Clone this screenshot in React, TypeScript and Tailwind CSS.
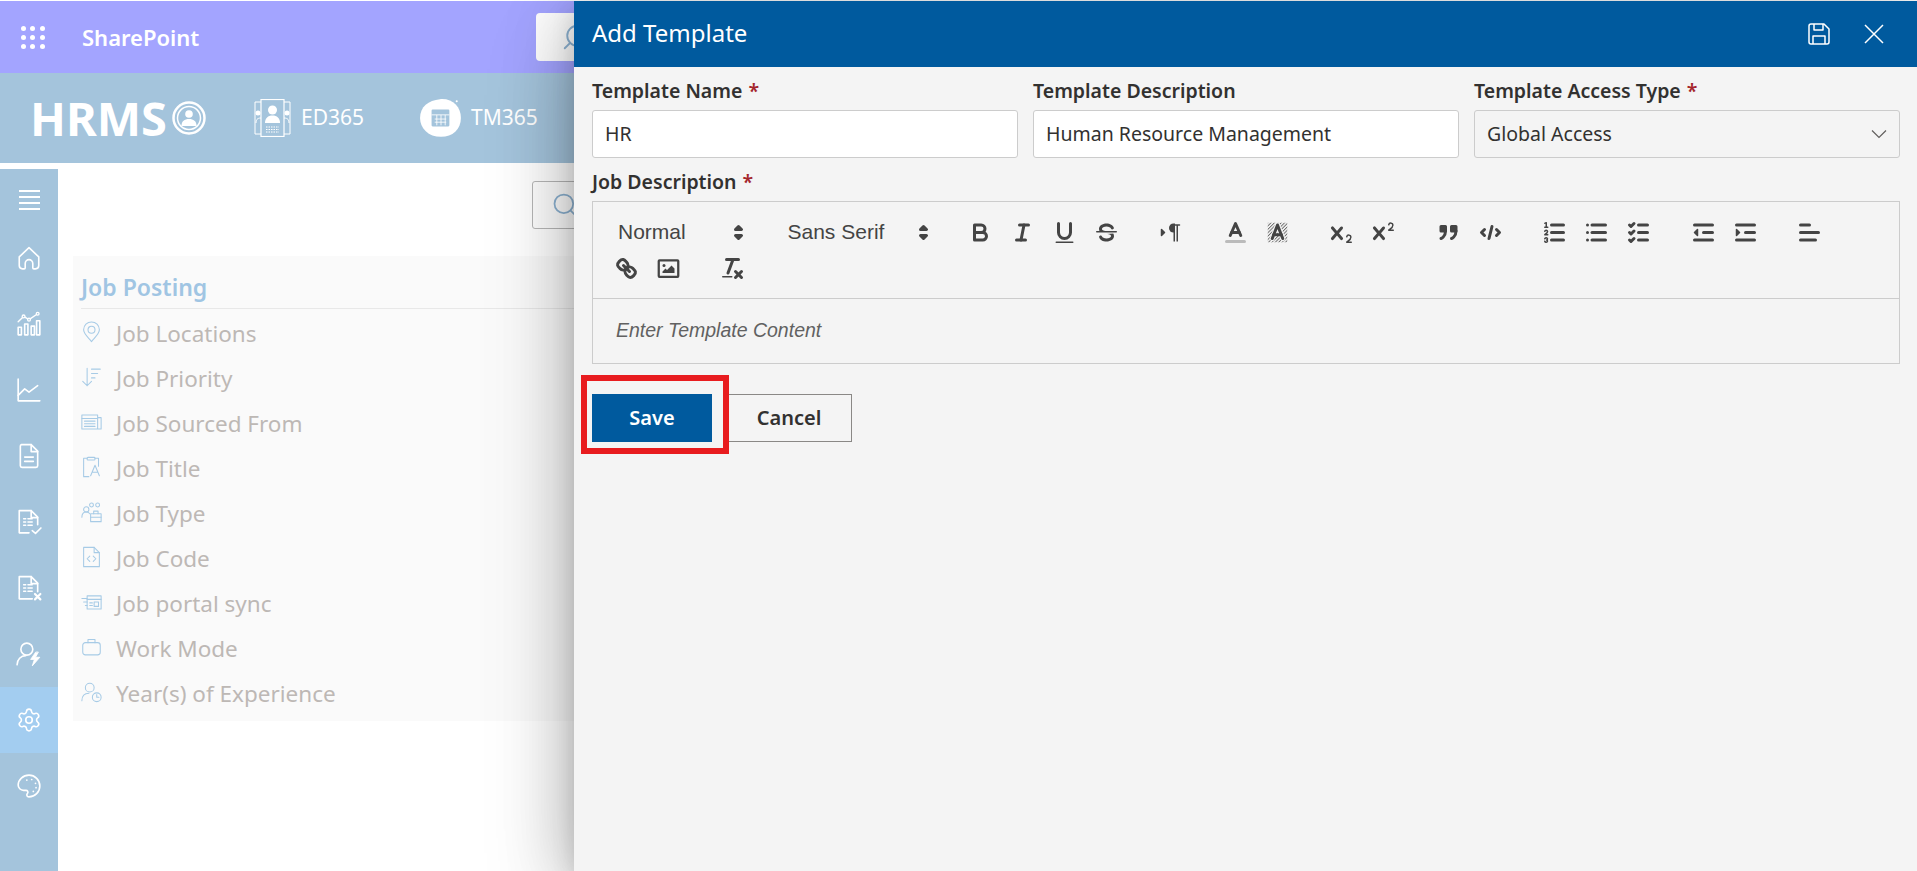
import type { ReactNode } from 'react';
import { Search } from 'lucide-react';

const Q = ({ children }: { children: ReactNode }) => (
  <svg viewBox="0 0 18 18" className="w-[27px] h-[27px]" fill="none" stroke="#444" strokeWidth={2} strokeLinecap="round" strokeLinejoin="round">
    {children}
  </svg>
);

const Btn = ({ children }: { children: ReactNode }) => (
  <div className="w-[42px] h-[36px] flex items-center justify-center">
    <Q>{children}</Q>
  </div>
);

const F = ({ d }: { d: string }) => <path d={d} fill="#444" stroke="none" />;

const xMark =
  'M9.65,5.241a1,1,0,0,0-1.409.108L6,7.964,3.759,5.349A1,1,0,0,0,2.192,6.59178Q2.21541,6.6213,2.241,6.649L4.684,9.5,2.241,12.35A1,1,0,0,0,3.71,13.70722q0.02557-.02768.049-0.05722L6,11.036,8.241,13.65a1,1,0,1,0,1.567-1.24277Q9.78459,12.3777,9.759,12.35L7.316,9.5,9.759,6.651A1,1,0,0,0,9.65,5.241Z';

const Picker = ({ label, width }: { label: string; width: string }) => (
  <div className={`${width} h-[36px] mr-[22.5px] flex items-center justify-between pl-[13px] text-[21px] text-[#444] font-['Liberation_Sans',Arial,sans-serif]`}>
    <span>{label}</span>
    <Q>
      <polygon points="7 11 9 13 11 11 7 11" fill="#444" />
      <polygon points="7 7 9 5 11 7 7 7" fill="#444" />
    </Q>
  </div>
);

const Group = ({ children }: { children: ReactNode }) => <div className="flex mr-[22.5px]">{children}</div>;

const Toolbar = () => (
  <div className="flex flex-wrap p-[12px] border-b border-[#ccc]">
    <Picker label="Normal" width="w-[147px]" />
    <Picker label="Sans Serif" width="w-[162px]" />
    <Group>
      <Btn>
        <path d="M5,4H9.5A2.5,2.5,0,0,1,12,6.5v0A2.5,2.5,0,0,1,9.5,9H5A0,0,0,0,1,5,9V4A0,0,0,0,1,5,4Z" />
        <path d="M5,9h5.5A2.5,2.5,0,0,1,13,11.5v0A2.5,2.5,0,0,1,10.5,14H5a0,0,0,0,1,0,0V9A0,0,0,0,1,5,9Z" />
      </Btn>
      <Btn>
        <line x1="7" x2="13" y1="4" y2="4" />
        <line x1="5" x2="11" y1="14" y2="14" />
        <line x1="8" x2="10" y1="14" y2="4" />
      </Btn>
      <Btn>
        <path d="M5,3V9a4.012,4.012,0,0,0,4,4H9a4.012,4.012,0,0,0,4-4V3" />
        <rect x="3" y="15" width="12" height="1" rx="0.5" fill="#444" stroke="none" />
      </Btn>
      <Btn>
        <line x1="2.5" x2="15.5" y1="8.5" y2="8.5" strokeWidth={1} />
        <F d="M9.007,8C6.542,7.791,6,7.519,6,6.5,6,5.792,7.283,5,9,5c1.571,0,2.765.679,2.969,1.309a1,1,0,0,0,1.9-.617C13.356,4.106,11.354,3,9,3,6.2,3,4,4.538,4,6.5a3.2,3.2,0,0,0,.5,1.843Z" />
        <F d="M8.984,10C11.457,10.208,12,10.479,12,11.5c0,.708-1.283,1.5-3,1.5-1.571,0-2.765-.679-2.969-1.309a1,1,0,1,0-1.9.617C4.644,13.894,6.646,15,9,15c2.8,0,5-1.538,5-3.5a3.2,3.2,0,0,0-.5-1.843Z" />
      </Btn>
    </Group>
    <Group>
      <Btn>
        <polygon points="3 11 5 9 3 7 3 11" fill="#444" strokeWidth={1} />
        <line x1="15" x2="11" y1="4" y2="4" strokeWidth={1} />
        <F d="M11,3a3,3,0,0,0,0,6h1V3H11Z" />
        <rect height="11" width="1" x="11" y="4" fill="#444" stroke="none" />
        <rect height="11" width="1" x="13" y="4" fill="#444" stroke="none" />
      </Btn>
    </Group>
    <Group>
      <Btn>
        <line x1="3" x2="15" y1="15" y2="15" stroke="#bbb" />
        <polyline points="5.5 11 9 3 12.5 11" />
        <line x1="11.63" x2="6.38" y1="9" y2="9" />
      </Btn>
      <Btn>
        <defs>
          <pattern id="hatch" width="1.6" height="1.6" patternUnits="userSpaceOnUse" patternTransform="rotate(45)">
            <rect width="0.6" height="1.6" fill="#666" stroke="none" />
          </pattern>
        </defs>
        <rect x="2.5" y="2.5" width="13" height="13" fill="url(#hatch)" stroke="none" />
        <polyline points="5.5 13 9 4 12.5 13" stroke="#f4f4f4" strokeWidth={3.4} />
        <polyline points="5.5 13 9 4 12.5 13" />
        <line x1="11.63" x2="6.38" y1="10.500" y2="10.500" />
      </Btn>
    </Group>
    <Group>
      <Btn>
        <F d="M15.5,15H13.861a3.858,3.858,0,0,0,1.914-2.975,1.8,1.8,0,0,0-1.6-1.751A1.921,1.921,0,0,0,12.021,11.7a0.50013,0.50013,0,1,0,.957.291h0a0.914,0.914,0,0,1,1.053-.725,0.81,0.81,0,0,1,.744.762c0,1.076-1.16971,1.86982-1.93971,2.43082A1.45639,1.45639,0,0,0,12,15.5a0.5,0.5,0,0,0,.5.5h3A0.5,0.5,0,0,0,15.5,15Z" />
        <F d={xMark} />
      </Btn>
      <Btn>
        <F d="M15.5,7H13.861a4.015,4.015,0,0,0,1.914-2.975,1.8,1.8,0,0,0-1.6-1.751A1.922,1.922,0,0,0,12.021,3.7a0.5,0.5,0,1,0,.957.291,0.917,0.917,0,0,1,1.053-.725,0.81,0.81,0,0,1,.744.762c0,1.077-1.164,1.925-1.934,2.486A1.423,1.423,0,0,0,12,7.5a0.5,0.5,0,0,0,.5.5h3A0.5,0.5,0,0,0,15.5,7Z" />
        <F d={xMark} />
      </Btn>
    </Group>
    <Group>
      <Btn>
        <rect height="3" width="3" x="4" y="5" fill="#444" />
        <rect height="3" width="3" x="11" y="5" fill="#444" />
        <path d="M7,8c0,4.031-3,5-3,5" />
        <path d="M14,8c0,4.031-3,5-3,5" />
      </Btn>
      <Btn>
        <polyline points="5 7 3 9 5 11" />
        <polyline points="13 7 15 9 13 11" />
        <line x1="10" x2="8" y1="5" y2="13" />
      </Btn>
    </Group>
    <Group>
      <Btn>
        <line x1="7" x2="15" y1="4" y2="4" />
        <line x1="7" x2="15" y1="9" y2="9" />
        <line x1="7" x2="15" y1="14" y2="14" />
        <line x1="2.5" x2="4.5" y1="5.5" y2="5.5" strokeWidth={1} />
        <F d="M3.5,6A0.5,0.5,0,0,1,3,5.5V3.085l-0.276.138A0.5,0.5,0,0,1,2.053,3c-0.124-.247-0.023-0.324.224-0.447l1-.5A0.5,0.5,0,0,1,4,2.5v3A0.5,0.5,0,0,1,3.5,6Z" />
        <path d="M4.5,10.5h-2c0-.234,1.85-1.076,1.85-2.234A0.959,0.959,0,0,0,2.5,8.156" strokeWidth={1} />
        <path d="M2.5,14.846a0.959,0.959,0,0,0,1.85-.109A0.7,0.7,0,0,0,3.75,14a0.688,0.688,0,0,0,.6-0.736,0.959,0.959,0,0,0-1.85-.109" strokeWidth={1} />
      </Btn>
      <Btn>
        <line x1="6" x2="15" y1="4" y2="4" />
        <line x1="6" x2="15" y1="9" y2="9" />
        <line x1="6" x2="15" y1="14" y2="14" />
        <line x1="3" x2="3" y1="4" y2="4" />
        <line x1="3" x2="3" y1="9" y2="9" />
        <line x1="3" x2="3" y1="14" y2="14" />
      </Btn>
      <Btn>
        <line x1="9" x2="15" y1="4" y2="4" />
        <polyline points="3 4 4 5 6 3" />
        <line x1="9" x2="15" y1="14" y2="14" />
        <polyline points="3 14 4 15 6 13" />
        <line x1="9" x2="15" y1="9" y2="9" />
        <polyline points="3 9 4 10 6 8" />
      </Btn>
    </Group>
    <Group>
      <Btn>
        <line x1="3" x2="15" y1="14" y2="14" />
        <line x1="3" x2="15" y1="4" y2="4" />
        <line x1="9" x2="15" y1="9" y2="9" />
        <polyline points="5 7 5 11 3 9 5 7" fill="#444" strokeWidth={1} />
      </Btn>
      <Btn>
        <line x1="3" x2="15" y1="14" y2="14" />
        <line x1="3" x2="15" y1="4" y2="4" />
        <line x1="9" x2="15" y1="9" y2="9" />
        <polyline points="3 7 3 11 5 9 3 7" fill="#444" strokeWidth={1} />
      </Btn>
    </Group>
    <Group>
      <Btn>
        <line x1="3" x2="15" y1="9" y2="9" />
        <line x1="3" x2="13" y1="14" y2="14" />
        <line x1="3" x2="9" y1="4" y2="4" />
      </Btn>
    </Group>
    <Group>
      <Btn>
        <line x1="7" x2="11" y1="7" y2="11" />
        <path d="M8.9,4.577a3.476,3.476,0,0,1,.36,4.679A3.476,3.476,0,0,1,4.577,8.9C3.185,7.5,2.035,6.4,4.217,4.217S7.5,3.185,8.9,4.577Z" />
        <path d="M13.423,9.1a3.476,3.476,0,0,0-4.679-.36,3.476,3.476,0,0,0,.36,4.679c1.392,1.392,2.5,2.542,4.679.36S14.815,10.5,13.423,9.1Z" />
      </Btn>
      <Btn>
        <rect x="2.500" y="3.500" width="13" height="11" rx="0.5" strokeWidth={1.5} />
        <circle cx="6" cy="7" r="1" fill="#444" stroke="none" />
        <polyline points="5 12 5 11 7 9 8 10 11 7 13 9 13 12 5 12" fill="#444" stroke="none" />
      </Btn>
    </Group>
    <Group>
      <Btn>
        <line x1="5" x2="13" y1="3" y2="3" />
        <line x1="6" x2="9.35" y1="12" y2="3" />
        <line x1="11" x2="15" y1="11" y2="15" />
        <line x1="15" x2="11" y1="11" y2="15" />
        <rect height="1" rx="0.5" width="7" x="2" y="14" fill="#444" stroke="none" />
      </Btn>
    </Group>
  </div>
);

// sidebar icons, white outline
const Side = ({ children, active }: { children: ReactNode; active?: boolean }) => (
  <div className={`h-[66px] flex items-center justify-center ${active ? 'bg-[#a3cdf0]' : ''}`}>
    <svg viewBox="0 0 24 24" className="w-[26px] h-[26px]" fill="none" stroke="#fff" strokeWidth={1.5} strokeLinecap="round" strokeLinejoin="round">
      {children}
    </svg>
  </div>
);

const Sidebar = () => (
  <div className="w-[58px] shrink-0 bg-[#a4c4dc]">
    <div className="h-[56px] pt-[6px] flex items-center justify-center">
      <div className="w-[21px] flex flex-col gap-[4.5px]">
        <div className="h-[1.5px] bg-white" />
        <div className="h-[1.5px] bg-white" />
        <div className="h-[1.5px] bg-white" />
        <div className="h-[1.5px] bg-white" />
      </div>
    </div>
    <Side>
      <path d="M3 11 12 2.500 21 11v8a3 3 0 0 1-3 3h-1.500a1 1 0 0 1-1-1v-4a3.500 3.500 0 0 0-7 0v4a1 1 0 0 1-1 1H6a3 3 0 0 1-3-3Z" />
    </Side>
    <Side>
      <path d="M2 22v-7h3v7ZM8 22V12h3v10ZM14 22v-8h3v8ZM19 22V9h3v13Z" strokeWidth={1.5} />
      <path d="M2 10 7 5l5 3 8-5.500" strokeWidth={1.3} />
      <circle cx="7" cy="5" r="1.300" fill="#a4c4dc" strokeWidth={1.2} />
      <circle cx="12" cy="8" r="1.300" fill="#a4c4dc" strokeWidth={1.2} />
      <circle cx="20" cy="2.500" r="1.300" fill="#a4c4dc" strokeWidth={1.2} />
    </Side>
    <Side>
      <path d="M2 2v20h20" />
      <path d="m2 17 6-6 4 3 8-6" />
    </Side>
    <Side>
      <path d="M5 1.500h9l6 6V21a1.500 1.500 0 0 1-1.500 1.500h-13A1.500 1.500 0 0 1 4 21V3a1.500 1.500 0 0 1 1-1.500Z" />
      <path d="M14 1.500V8h6M8 13h8M8 17h8" />
    </Side>
    <Side>
      <path d="M12 22H3V1.500h11l6 6v7" />
      <path d="M14 1.500V8h6" />
      <path d="M7 9h2M7 12h2M7 15h2M11 9h4M11 12h4M11 15h4" strokeWidth={1.3} />
      <path d="m15 20 3 2.500 5-5" />
    </Side>
    <Side>
      <path d="M15 22H3V1.500h11l6 6v8" />
      <path d="M14 1.500V8h6" />
      <path d="M7 9h2M7 12h2M7 15h2M11 9h4M11 12h4M11 15h4" strokeWidth={1.3} />
      <path d="m17.500 17.500 5 5M22.500 17.500l-5 5" strokeWidth={2} />
    </Side>
    <Side>
      <circle cx="10" cy="7.500" r="5.500" />
      <path d="M1 22c0-5 3.500-8.500 8-8.500" />
      <path d="M18 10.500 13.500 17h3.500l-2 6 7-8h-4l2.500-4.500Z" fill="#fff" strokeWidth={0.8} />
    </Side>
    <Side active>
      <path d="M9.671 4.136a2.340 2.340 0 0 1 4.659 0 2.340 2.340 0 0 0 3.319 1.915 2.340 2.340 0 0 1 2.330 4.033 2.340 2.340 0 0 0 0 3.831 2.340 2.340 0 0 1-2.330 4.033 2.340 2.340 0 0 0-3.319 1.915 2.340 2.340 0 0 1-4.659 0 2.340 2.340 0 0 0-3.320-1.915 2.340 2.340 0 0 1-2.330-4.033 2.340 2.340 0 0 0 0-3.831A2.340 2.340 0 0 1 6.351 6.051a2.340 2.340 0 0 0 3.320-1.915" />
      <circle cx="12" cy="12" r="3" />
    </Side>
    <Side>
      <path transform="matrix(-1 0 0 1 24 0)" d="M12 22a1 1 0 0 1 0-20 10 9 0 0 1 10 9 5 5 0 0 1-5 5h-2.250a1.750 1.750 0 0 0-1.400 2.800l.3.4a1.750 1.750 0 0 1-1.400 2.800z" />
      <circle cx="10" cy="6.500" r="0.800" fill="#fff" stroke="none" />
      <circle cx="14.500" cy="6" r="0.800" fill="#fff" stroke="none" />
      <circle cx="18" cy="9.500" r="0.800" fill="#fff" stroke="none" />
      <circle cx="18.500" cy="13.500" r="0.800" fill="#fff" stroke="none" />
      <circle cx="16" cy="17" r="0.800" fill="#fff" stroke="none" />
    </Side>
  </div>
);

const jobIcons: ReactNode[] = [
  <>
    <path d="M12 23C8 18 3 14 3 9.500a9 9 0 0 1 18 0C21 14 16 18 12 23Z" />
    <circle cx="12" cy="9.500" r="4" />
  </>,
  <>
    <path d="M7 2v20M2 17l5 5 5-5M12 3h10M12 8h7M12 13h4" />
  </>,
  <>
    <path d="M1 4h18v16H1ZM19 7h4v13h-4" />
    <path d="M1 8h18M4 11h12M4 14h12M4 17h12" />
  </>,
  <>
    <path d="M7 2H3v21h6M16 2h4v9" />
    <rect x="7" y="1" width="9" height="3" rx="1" />
    <path d="m11 22 5-12 5 12M13 18h6" />
  </>,
  <>
    <circle cx="6" cy="9" r="3" />
    <path d="M1 18c0-4 2-6 5-6s3 1 4 2" />
    <circle cx="12" cy="4" r="2.200" />
    <circle cx="19" cy="4" r="2.200" />
    <rect x="11" y="14" width="12" height="9" />
    <path d="M14.500 14v-3h5v3M11 18h12" />
  </>,
  <>
    <path d="M3 1h12l6 6v16H3Z" />
    <path d="M15 1v6h6M10 11l-3 3 3 3M14 11l3 3-3 3" />
  </>,
  <>
    <path d="M7 5h16v15H7Z" />
    <path d="M1 8h6M3 12h4M5 16h2M7 9h16M10 13h3M10 16h3" />
    <rect x="15" y="12" width="5" height="5" />
  </>,
  <>
    <rect x="2" y="7" width="20" height="14" rx="3" />
    <path d="M8 7V3.500h8V7" />
  </>,
  <>
    <circle cx="10" cy="7" r="5" />
    <path d="M1 22c0-6 3-8.500 8-8.500" />
    <circle cx="18" cy="18" r="5" />
    <path d="M18 15v3h2.500" />
  </>,
];

const jobs = ['Job Locations', 'Job Priority', 'Job Sourced From', 'Job Title', 'Job Type', 'Job Code', 'Job portal sync', 'Work Mode', 'Year(s) of Experience'];

const Field = ({ label, required, children }: { label: string; required?: boolean; children: ReactNode }) => (
  <div>
    <div className="h-[34px] pb-[5px] flex items-center text-[19.5px] font-semibold text-[#323130] whitespace-nowrap">
      {label}
      {required && <span className="text-[#a4262c] ml-[6px]">*</span>}
    </div>
    {children}
  </div>
);

export default function App() {
  return (
    <div className="relative h-screen overflow-hidden bg-white pt-px font-['Noto_Sans',sans-serif]">
      {/* SharePoint bar */}
      <div className="h-[72px] bg-[#a3a4ff] flex items-center">
        <div className="ml-[21px] w-[24px] grid grid-cols-3 gap-[4px]">
          {Array.from({ length: 9 }).map((_, i) => (
            <div key={i} className="w-[5px] h-[5px] rounded-full bg-white" />
          ))}
        </div>
        <div className="ml-[37px] text-[22px] font-semibold text-white">SharePoint</div>
        <div className="ml-[337px] h-[48px] w-[300px] bg-white rounded-[4px] flex items-center pl-[25px]">
          <Search className="w-[30px] h-[30px] text-[#8eb4d4] -scale-x-100" strokeWidth={1.5} />
        </div>
      </div>

      {/* HRMS header */}
      <div className="h-[90px] bg-[#a4c4dc] flex items-center pl-[30px] text-white">
        <div className="text-[47px] leading-none font-bold">HRMS</div>
        <svg viewBox="0 0 34 34" className="ml-[5px] w-[34px] h-[34px]" fill="none" stroke="#fff">
          <circle cx="17" cy="17" r="15.500" strokeWidth={2.500} />
          <circle cx="17" cy="17" r="11.500" strokeWidth={1.500} />
          <circle cx="17" cy="13" r="3.800" fill="#fff" stroke="none" />
          <path d="M9.500 25c0-5 3-7 7.500-7s7.500 2 7.500 7Z" fill="#fff" stroke="none" />
        </svg>
        <svg viewBox="0 0 37 38" className="ml-[48px] w-[37px] h-[38px]" fill="none" stroke="#fff" strokeWidth={1}>
          <path d="M7 3H1v32h6M30 3h6v32h-6" />
          <rect x="7" y="0.500" width="23" height="37" strokeWidth={1.200} />
          <circle cx="18.500" cy="11" r="4.500" fill="#fff" stroke="none" />
          <path d="M11 24c0-5 3-7.500 7.500-7.500S26 19 26 24Z" fill="#fff" stroke="none" />
          <path d="M12 28h13M12 30.500h13M12 33h13" strokeDasharray="1.500 1" />
          <circle cx="4" cy="14" r="2.500" fill="#fff" stroke="none" />
          <circle cx="33" cy="14" r="2.500" fill="#fff" stroke="none" />
          <path d="M2 24c0-3 1-5 5-5M35 24c0-3-1-5-5-5" />
        </svg>
        <div className="ml-[10px] text-[21px]">ED365</div>
        <svg viewBox="0 0 42 38" className="ml-[55px] w-[44px] h-[40px]">
          <path d="M20 1c12-1 20 7 20 18 0 11-8 18-19 18C9 37 1 29 1 19 1 8 9 2 20 1Z" fill="#fff" />
          <circle cx="36" cy="3" r="1" fill="#fff" />
          <rect x="12" y="11" width="17" height="16" rx="1" fill="#a4c4dc" />
          <path d="M12 16h17M15 20h11M15 23h11M17 16v10M21 16v10M25 16v10" stroke="#fff" strokeWidth={0.800} />
        </svg>
        <div className="ml-[8px] text-[21px]">TM365</div>
      </div>

      <div className="h-[6px]" />

      <div className="flex h-[702px]">
        <Sidebar />
        <div className="flex-1 min-w-0">
          <div className="h-[87px] pt-[12px] pl-[474px]">
            <div className="h-[48px] w-[300px] border border-[#b8b8b8] rounded-[3px] flex items-center pl-[18px]">
              <Search className="w-[28px] h-[28px] text-[#8eb4d4]" strokeWidth={1.5} />
            </div>
          </div>
          <div className="ml-[15px] bg-[#fafafa] pl-[8px] h-[465px]">
            <div className="h-[53px] pt-[13px] border-b border-[#e8e8e8] text-[23px] leading-[36px] font-semibold text-[#a0c5e3]">Job Posting</div>
            <div className="pt-[3px]">
              {jobs.map((job, i) => (
                <div key={job} className="h-[45px] flex items-center">
                  <svg viewBox="0 0 24 24" className="w-[21px] h-[24px] mb-[6px] shrink-0" fill="none" stroke="#a7cbe6" strokeWidth={1.2} strokeLinecap="round" strokeLinejoin="round">
                    {jobIcons[i]}
                  </svg>
                  <span className="ml-[14px] pb-[2px] text-[22.5px] text-[#bdb8b5]">{job}</span>
                </div>
              ))}
            </div>
          </div>
        </div>
      </div>

      {/* Add Template panel */}
      <div className="absolute top-px right-0 bottom-0 w-[1343px] bg-[#f4f4f4] shadow-[0_38px_86px_rgba(0,0,0,0.2),0_7px_22px_rgba(0,0,0,0.12),-10px_0_60px_rgba(0,0,0,0.15)]">
        <div className="h-[66px] bg-[#005a9e] flex items-center justify-between pl-[18px] pr-[25px] text-white">
          <div className="text-[24px] pb-[2px]">Add Template</div>
          <div className="flex items-center gap-[26px]">
            <svg viewBox="0 0 22 22" className="w-[22px] h-[22px]" fill="none" stroke="#fff" strokeWidth={1.500} strokeLinejoin="round">
              <path d="M1 3a2 2 0 0 1 2-2h13l5 5v13a2 2 0 0 1-2 2H3a2 2 0 0 1-2-2Z" />
              <path d="M6 1v6h9V1M5 21v-8h12v8" />
            </svg>
            <svg viewBox="0 0 24 24" className="w-[36px] h-[36px]" fill="none" stroke="#fff" strokeWidth={1}>
              <path d="M18 6 6 18M6 6l12 12" />
            </svg>
          </div>
        </div>
        <div className="pl-[18px] pr-[17px] pt-[9px]">
          <div className="grid grid-cols-3 gap-x-[15px]">
            <Field label="Template Name" required>
              <div className="h-[48px] bg-white border border-[#ccc] rounded-[3px] flex items-center px-[12px] text-[19.5px] text-[#323130]">HR</div>
            </Field>
            <Field label="Template Description">
              <div className="h-[48px] bg-white border border-[#ccc] rounded-[3px] flex items-center px-[12px] text-[19.5px] text-[#323130]">Human Resource Management</div>
            </Field>
            <Field label="Template Access Type" required>
              <div className="h-[48px] border border-[#ccc] rounded-[3px] flex items-center justify-between pl-[12px] pr-[6px] text-[19.5px] text-[#323130]">
                Global Access
                <svg viewBox="0 0 24 24" className="w-[28px] h-[28px]" fill="none" stroke="#605e5c" strokeWidth={1}>
                  <path d="m6 9 6 6 6-6" />
                </svg>
              </div>
            </Field>
          </div>
          <div className="mt-[9px]">
            <Field label="Job Description" required>
              <div className="border border-[#ccc]">
                <Toolbar />
                <div className="h-[64px] pl-[23px] flex items-center text-[19.5px] italic text-[#616161] font-['Liberation_Sans',Arial,sans-serif]">Enter Template Content</div>
              </div>
            </Field>
          </div>
          <div className="flex mt-[30px]">
            <div className="w-[120px] h-[48px] bg-[#005a9e] flex items-center justify-center text-[20px] font-semibold text-white">Save</div>
            <div className="ml-[14px] w-[126px] h-[48px] border border-[#8a8886] flex items-center justify-center text-[20px] font-semibold text-[#323130]">Cancel</div>
          </div>
        </div>
        {/* red callout round the Save button */}
        <div className="absolute left-[7px] top-[374px] w-[148px] h-[79px] border-[6px] border-[#e81c1f]" />
      </div>
    </div>
  );
}
